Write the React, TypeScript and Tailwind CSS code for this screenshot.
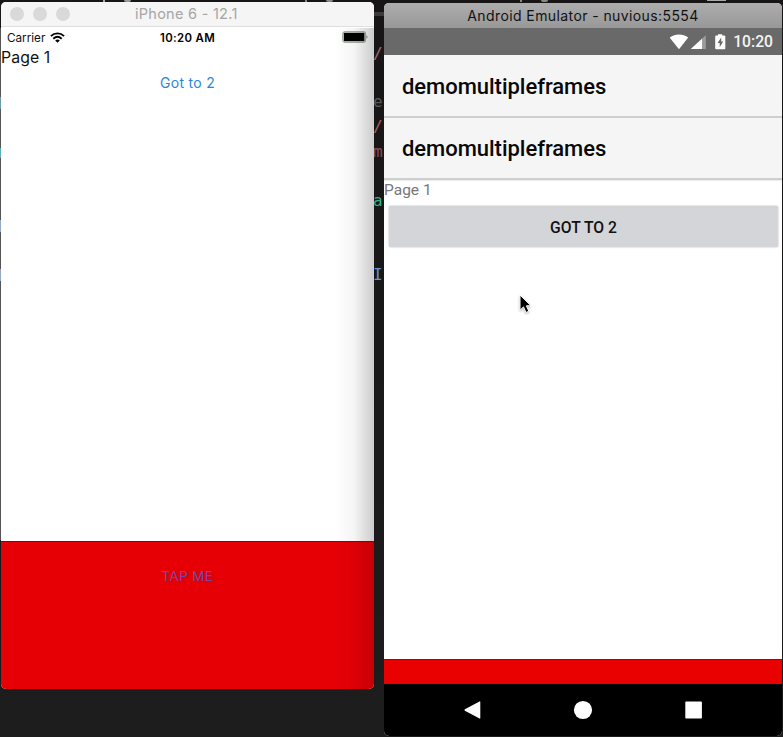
import React from "react";

function TrafficLights() {
  return (
    <div className="flex gap-[9px]">
      <span className="size-[14px] rounded-full bg-[#d9d9d9]" />
      <span className="size-[14px] rounded-full bg-[#d9d9d9]" />
      <span className="size-[14px] rounded-full bg-[#d9d9d9]" />
    </div>
  );
}

function WifiArcs() {
  return (
    <svg width="15" height="11" viewBox="0 0 15 11" fill="none" stroke="#000" strokeWidth="1.9">
      <path d="M0.9 4.1C4.7 0.5 10.3 0.5 14.1 4.1" />
      <path d="M3.3 6.7C5.8 4.5 9.2 4.5 11.7 6.7" />
      <path d="M5.2 8.4C6.5 7.3 8.5 7.3 9.8 8.4L7.5 10.8Z" fill="#000" stroke="none" />
    </svg>
  );
}

function IphoneWindow() {
  return (
    <section className="absolute left-px top-[2px] flex h-[687px] w-[373px] flex-col overflow-hidden rounded-[5px] bg-white font-['Inter',sans-serif]">
      <header className="flex h-[25px] shrink-0 items-center border-b border-[#dedede] bg-[#f5f5f5] pl-[9px]">
        <TrafficLights />
        <span className="ml-[65px] text-[14.5px] leading-[20px] tracking-[0.27px] text-[#a5a5a5]">iPhone 6 - 12.1</span>
      </header>
      <div className="grid h-[21px] shrink-0 grid-cols-[1fr_56px_1fr] items-center pl-[6px] pr-[6px]">
        <div className="flex items-center gap-[5px]">
          <span className="text-[11.7px] leading-5 text-[#111]">Carrier</span>
          <WifiArcs />
        </div>
        <span className="whitespace-nowrap text-center text-[11.4px] font-semibold leading-5 tracking-[0.35px] text-black">10:20 AM</span>
        <svg className="-mt-px justify-self-end" width="26" height="12" viewBox="0 0 26 12">
          <rect x="0.7" y="0.7" width="22.8" height="10.6" rx="2.5" fill="#fff" stroke="#a9b0a9" strokeWidth="1.3" />
          <rect x="1.8" y="1.8" width="20.6" height="8.4" rx="0.8" fill="#000" />
          <path d="M24.3 4.2L26 6L24.3 7.8Z" fill="#999" />
        </svg>
      </div>
      <p className="h-[22px] shrink-0 text-[15.8px] leading-[20px] tracking-[0.1px] text-[#111]">Page 1</p>
      <button className="h-[26px] shrink-0 text-[14px] leading-[26px] tracking-[0.3px] text-[#2b86d9]">Got to 2</button>
      <div className="flex-1" />
      <footer className="flex h-[148px] shrink-0 justify-center border-t border-[#9b0000] bg-[#e60006] pt-[24px]">
        <span className="h-5 text-[13.6px] leading-5 tracking-[0.35px] text-[#7047a2]">TAP ME</span>
      </footer>
      <div className="pointer-events-none absolute bottom-[148px] right-0 top-[26px] w-[40px] bg-linear-to-r from-transparent via-black/4 to-black/20" />
      <div className="pointer-events-none absolute bottom-0 right-0 h-[148px] w-[40px] bg-linear-to-r from-transparent via-black/4 to-black/14" />
    </section>
  );
}

function StatusIcons() {
  return (
    <svg width="58" height="18" viewBox="0 0 58 18" fill="#fff">
      <path d="M-0.4 4.6C4.6 0.3 13.2 0.3 18.2 4.6L9 16.2Z" />
      <path d="M35.8 2.2V16H20.8Z" fillOpacity=".35" />
      <path d="M32 5.8V16H20.8Z" />
      <path fillRule="evenodd" d="M48 1.2H52.2V2.6H54.3Q55.3 2.6 55.3 3.6V15.2Q55.3 16.2 54.3 16.2H46.2Q45.2 16.2 45.2 15.2V3.6Q45.2 2.6 46.2 2.6H48ZM51.2 4.5L47.6 10H49.7V14.3L53.2 8.6H51.2Z" />
    </svg>
  );
}

function ActionBar({ className }: { className: string }) {
  return (
    <div className={`flex shrink-0 items-center border-b-2 border-[#cfcfcf] bg-[#f5f5f5] pl-[18px] text-[22px] font-medium text-[#080808] ${className}`}>
      <h1 className="tracking-[-0.03px]">demomultipleframes</h1>
    </div>
  );
}

function AndroidWindow() {
  return (
    <section className="absolute left-[384px] top-[3px] flex h-[733px] w-[398px] flex-col overflow-hidden rounded-[5px] bg-white font-['Roboto',sans-serif]">
      <header className="h-[25px] shrink-0 bg-linear-to-b from-[#adadad] to-[#989898] text-center font-['Inter',sans-serif] text-[14px] leading-[26px] tracking-[0.4px] text-[#111]">
        Android Emulator - nuvious:5554
      </header>
      <div className="flex h-[27px] shrink-0 items-center justify-end gap-[5px] bg-[#696969] pr-[9px] pt-px">
        <StatusIcons />
        <span className="text-[15.7px] font-medium leading-[26px] text-[#f4f4f4]">10:20</span>
      </div>
      <ActionBar className="h-[63px] pt-[2px]" />
      <ActionBar className="h-[62px] pt-px" />
      <div className="h-px shrink-0 bg-[#ececec]" />
      <p className="h-[25px] shrink-0 text-[15.5px] leading-[18px] text-[#777]">Page 1</p>
      <button className="ml-[5px] mr-[4px] h-[41px] shrink-0 rounded-[2px] bg-[#d4d5d8] pt-[2px] text-[15.7px] font-medium text-[#111] shadow-[0_0_2px_#aaa]">
        GOT TO 2
      </button>
      <div className="flex-1" />
      <div className="h-[25px] shrink-0 border-t border-[#b00000] bg-[#e90000]" />
      <nav className="flex h-[52px] shrink-0 items-center bg-black pl-[80px]">
        <svg width="240" height="20" viewBox="0 0 240 20" fill="#fff">
          <path d="M15.5 1.5Q16.3 1 16.3 2V18Q16.3 19 15.5 18.5L0.9 10.7Q0 10 0.9 9.3Z" />
          <circle cx="119" cy="10" r="9.1" />
          <rect x="221.3" y="1.6" width="16.6" height="17" rx="0.8" />
        </svg>
      </nav>
    </section>
  );
}

function EditorBackdrop() {
  const glyph = "absolute left-[373px] w-[10px] overflow-hidden font-['DejaVu_Sans_Mono',monospace] text-[16px] leading-5";
  return (
    <>
      <span className="absolute left-[103px] top-0 h-[2px] w-[2px] bg-[#aaa]" />
      <span className="absolute left-[124px] top-0 h-[2px] w-[7px] rounded-b-full bg-[#999]" />
      <span className="absolute left-[305px] top-0 h-[2px] w-[2px] bg-[#888]" />
      <span className="absolute left-[326px] top-0 h-[2px] w-[7px] rounded-b-full bg-[#888]" />
      <span className="absolute left-[520px] top-0 h-[2px] w-[2px] bg-[#888]" />
      <span className="absolute left-[541px] top-0 h-[2px] w-[7px] rounded-b-full bg-[#888]" />
      <span className="absolute left-[707px] top-0 h-px w-[19px] bg-[#aaa]" />
      <span className="absolute left-[374px] top-[12px] h-[4px] w-[10px] bg-[#3b3b3c]" />
      <span className={`${glyph} top-[44px] text-[#a36c6c]`}>/</span>
      <span className={`${glyph} top-[92px] text-[#5b5959]`}>e</span>
      <span className={`${glyph} top-[117px] text-[#ac615b]`}>/</span>
      <span className={`${glyph} top-[142px] text-[#8e4c4c]`}>m</span>
      <span className={`${glyph} top-[191px] text-[#3cae85]`}>a</span>
      <span className={`${glyph} top-[265px] text-[#6b91c8]`}>I</span>
      <div className="absolute left-0 top-[28px] h-[512px] w-px bg-[#555]" />
      <div className="absolute left-0 top-[97px] h-[12px] w-px bg-[#6b9ab2]" />
      <div className="absolute left-0 top-[148px] h-[10px] w-px bg-[#5cadc1]" />
      <div className="absolute left-0 top-[220px] h-[12px] w-px bg-[#91a8c8]" />
      <div className="absolute left-0 top-[269px] h-[12px] w-px bg-[#91a8c8]" />
    </>
  );
}

export default function App() {
  return (
    <main className="relative h-[737px] w-[783px] overflow-hidden bg-linear-to-b from-[#171516] to-[#1d1d1d]">
      <EditorBackdrop />
      <IphoneWindow />
      <AndroidWindow />
      <svg className="absolute left-[519px] top-[294px] drop-shadow-[0_1px_1px_rgba(0,0,0,0.3)]" width="14" height="21" viewBox="0 0 14 21">
        <path d="M1 1V16.2L4.5 12.9L7 18.5L9.8 17.2L7.4 11.8H12Z" fill="#000" stroke="#fff" strokeWidth="1" />
      </svg>
    </main>
  );
}
